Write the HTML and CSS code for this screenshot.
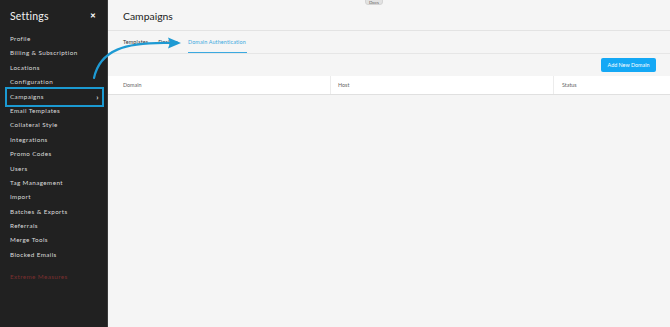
FILE: index.html
```html
<!DOCTYPE html>
<html>
<head>
<meta charset="utf-8">
<link rel="stylesheet" href="styles.css">
</head>
<body>
<div class="app">
  <aside class="sidebar">
    <div class="side-head">
      <span class="side-title">Settings</span>
      <span class="close">&#x2715;</span>
    </div>
    <ul class="menu">
      <li>Profile</li>
      <li>Billing &amp; Subscription</li>
      <li>Locations</li>
      <li>Configuration</li>
      <li class="active">Campaigns<span class="chev">&#x203A;</span></li>
      <li>Email Templates</li>
      <li>Collateral Style</li>
      <li>Integrations</li>
      <li>Promo Codes</li>
      <li>Users</li>
      <li>Tag Management</li>
      <li>Import</li>
      <li>Batches &amp; Exports</li>
      <li>Referrals</li>
      <li>Merge Tools</li>
      <li>Blocked Emails</li>
      <li class="danger">Extreme Measures</li>
    </ul>
  </aside>
  <main class="main">
    <div class="docs">Docs</div>
    <h1 class="title">Campaigns</h1>
    <nav class="tabs">
      <span class="tab">Templates</span>
      <span class="tab">Designs</span>
      <span class="tab current">Domain Authentication</span>
    </nav>
    <div class="toolbar">
      <button class="btn">Add New Domain</button>
    </div>
    <div class="thead">
      <div class="th c1">Domain</div>
      <div class="th c2">Host</div>
      <div class="th c3">Status</div>
    </div>
  </main>
  <svg class="arrow" width="200" height="100" viewBox="0 0 200 100">
    <path d="M94 78 C100 50 125 42 170 43" fill="none" stroke="#1e9ad3" stroke-width="2.2" stroke-linecap="round"/>
    <polygon points="181,43 168,37.5 170,43 168,48.5" fill="#1e9ad3"/>
  </svg>
</div>
</body>
</html>
```
FILE: styles.css
```css
* { box-sizing: border-box; }
html, body { margin: 0; padding: 0; }
body {
  width: 670px;
  height: 327px;
  overflow: hidden;
  font-family: "Lato", "Liberation Sans", sans-serif;
  background: #f5f5f5;
}
.app {
  position: relative;
  display: flex;
  height: 327px;
}
.sidebar {
  width: 108px;
  flex: none;
  background: #212121;
  color: #e8e8e8;
  border-right: 1px solid #3a3a3a;
}
.side-head {
  display: flex;
  align-items: center;
  justify-content: space-between;
  height: 32px;
  padding: 0 10px 0 10px;
}
.side-title {
  font-size: 10.5px;
  color: #f2f2f2;
  letter-spacing: 0.2px;
}
.close {
  font-size: 6.5px;
  font-weight: 700;
  color: #fff;
  margin-right: 1px;
}
.menu {
  list-style: none;
  margin: 0;
  padding: 0;
}
.menu li {
  position: relative;
  height: 14.4px;
  line-height: 14.4px;
  padding: 0 10px;
  font-size: 6.3px;
  letter-spacing: 0.4px;
  color: #dcdcdc;
  white-space: nowrap;
  display: flex;
  justify-content: space-between;
}
.menu li.active::after {
  content: "";
  position: absolute;
  top: -2.8px;
  bottom: -2.8px;
  left: 5px;
  right: 3px;
  border: 2px solid #1b9ad2;
}
.chev {
  font-size: 8px;
  font-weight: 700;
  margin-right: -2px;
}
.menu li.danger {
  margin-top: 8px;
  color: #7a2f2f;
}
.main {
  position: relative;
  flex: 1;
  display: flex;
  flex-direction: column;
  background: #f5f5f5;
}
.docs {
  position: absolute;
  top: -6px;
  left: 257px;
  width: 18px;
  height: 11px;
  border-radius: 3px;
  background: #e2e2e2;
  border: 1px solid #d4d4d4;
  font-size: 4.5px;
  color: #666;
  text-align: center;
  line-height: 16px;
}
.title {
  margin: 0;
  height: 31px;
  padding: 10px 0 0 15px;
  font-size: 10.4px;
  font-weight: 400;
  color: #222;
  border-bottom: 1px solid #e3e3e3;
}
.tabs {
  display: flex;
  height: 23px;
  padding-left: 15px;
  gap: 10px;
  border-bottom: 1px solid #e6e6e6;
}
.tab {
  font-size: 5.4px;
  color: #333;
  line-height: 22px;
  letter-spacing: 0.15px;
}
.tab.current {
  color: #3ba9e0;
  border-bottom: 1.5px solid #3ba9e0;
  padding-right: 1px;
}
.toolbar {
  display: flex;
  justify-content: flex-end;
  padding: 4px 14px 4px 0;
}
.btn {
  height: 14px;
  width: 55px;
  padding: 0;
  border: none;
  border-radius: 2px;
  background: #14a8f5;
  color: #fff;
  font-family: inherit;
  font-size: 5.4px;
  cursor: pointer;
}
.thead {
  display: flex;
  height: 19px;
  background: #fff;
  border-bottom: 1px solid #e0e0e0;
}
.th {
  font-size: 5.4px;
  color: #666;
  line-height: 18px;
  padding-left: 15px;
}
.c1 { width: 223px; border-right: 1px solid #ececec; }
.c2 { width: 223px; border-right: 1px solid #ececec; padding-left: 7px; }
.c3 { flex: 1; padding-left: 8px; }
.arrow {
  position: absolute;
  left: 0;
  top: 0;
  pointer-events: none;
}
```
